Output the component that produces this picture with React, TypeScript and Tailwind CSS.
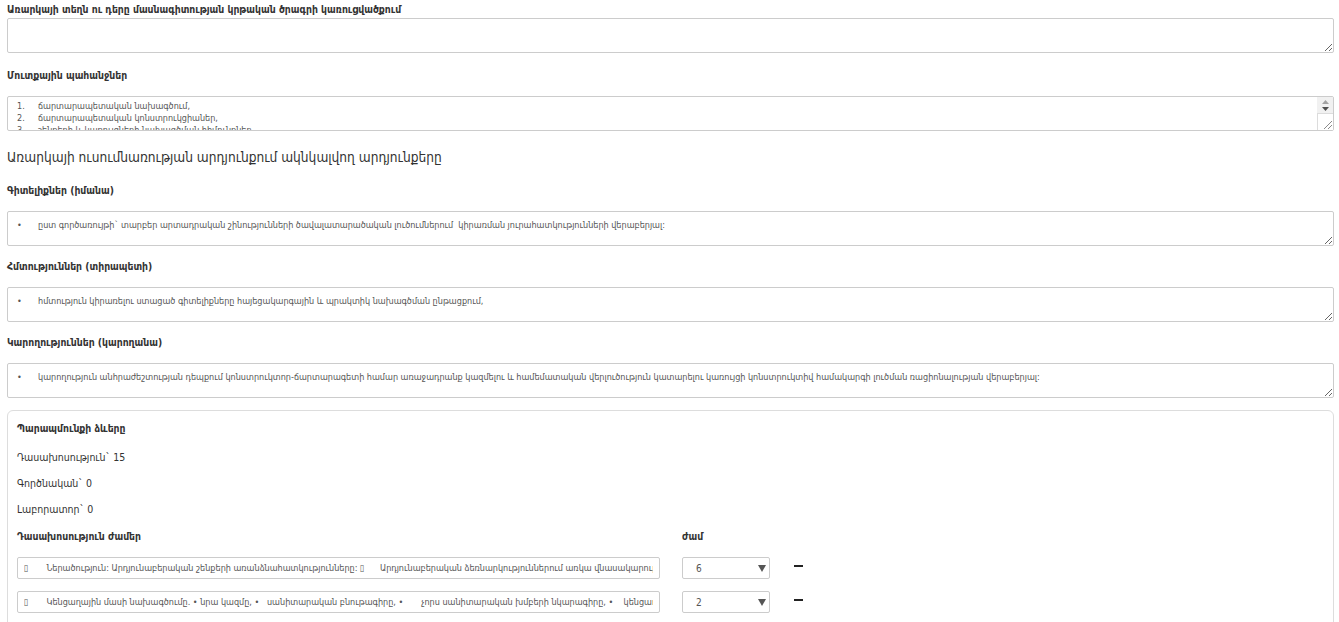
import React from 'react';

interface FieldProps {
  label: string;
  value?: string;
  scroll?: boolean;
  pad?: string;
  top?: string;
}

// Fake classic scrollbar for the overflowing textarea, sitting on top of its right edge.
const ScrollTrack: React.FC = () => (
  <div className="absolute right-[1px] top-[1px] bottom-[1px] w-[16px] flex flex-col pointer-events-none">
    <div className="h-[16px] bg-[#f1f1f1] flex flex-col items-center justify-center gap-[3px]">
      <svg width="7" height="4" viewBox="0 0 7 4">
        <path d="M0 4L3.5 0L7 4z" fill="#a3a3a3" />
      </svg>
      <svg width="7" height="4" viewBox="0 0 7 4">
        <path d="M0 0h7L3.5 4z" fill="#505050" />
      </svg>
    </div>
    <div className="flex-1 bg-white border-l border-t border-[#dcdcdc] relative">
      <svg className="absolute right-[1px] bottom-[1px]" width="9" height="9" viewBox="0 0 9 9">
        <path d="M9 1L1 9M9 5L5 9" stroke="#8a8a8a" strokeWidth="1" />
      </svg>
    </div>
  </div>
);

const Field: React.FC<FieldProps> = ({ label, value = '', scroll, pad = 'pt-[7px]', top = 'mt-[13px]' }) => (
  <div className={top}>
    <p className="h-[14px] text-[10.3px] leading-[14px] font-bold">{label}</p>
    <div className="relative mt-[14px]">
      <textarea
        readOnly
        defaultValue={value}
        className={`block w-full h-[35px] border border-[#ccc] rounded-[2px] bg-white pl-[9px] pr-2 ${pad} text-[9px] leading-[12px] text-[#555] [tab-size:21px] outline-none overflow-hidden`}
      />
      {scroll && <ScrollTrack />}
    </div>
  </div>
);

interface HourRow {
  id: number;
  topic: string;
  hours: string;
}

const rows: HourRow[] = [
  {
    id: 1,
    topic:
      '▯       Ներածություն: Արդյունաբերական շենքերի առանձնահատկությունները: ▯      Արդյունաբերական ձեռնարկություններում առկա վնասակարության գործոնները',
    hours: '6',
  },
  {
    id: 2,
    topic:
      '▯       Կենցաղային մասի նախագծումը. • նրա կազմը, •   սանիտարական բնութագիրը, •       չորս սանիտարական խմբերի նկարագիրը, •    կենցաղային սենքերի տեղադրումը',
    hours: '2',
  },
];

const HoursRow: React.FC<{ row: HourRow }> = ({ row }) => (
  <div className="flex items-center h-[22px]">
    <input
      readOnly
      value={row.topic}
      className="block w-[643px] h-[22px] border border-[#ccc] rounded-[2px] px-[6px] text-[9px] text-[#555] outline-none"
    />
    <div className="relative ml-[22px] w-[88px] h-[22px]">
      <select
        defaultValue={row.hours}
        className="block appearance-none w-full h-full border border-[#ccc] rounded-[2px] bg-white pl-[13px] text-[10px] text-[#555] outline-none"
      >
        {['1', '2', '3', '4', '5', '6', '7', '8'].map((h) => (
          <option key={h} value={h}>
            {h}
          </option>
        ))}
      </select>
      <svg className="absolute right-[4px] top-[8px] pointer-events-none" width="8" height="7" viewBox="0 0 8 7">
        <path d="M0 0h8L4 7z" fill="#555" />
      </svg>
    </div>
    <span className="ml-[24px] mb-[4px] w-[9px] h-[2px] bg-[#222]" />
  </div>
);

export default function App() {
  return (
    <div className="bg-white min-h-screen pl-[7px] pr-[5px] pt-[2px] text-[#333] font-['DejaVu_Sans',sans-serif] [font-stretch:condensed]">
      <p className="h-[14px] text-[10.3px] leading-[14px] font-bold">
        Առարկայի տեղն ու դերը մասնագիտության կրթական ծրագրի կառուցվածքում
      </p>
      <textarea
        readOnly
        className="mt-[2px] block w-full h-[35px] border border-[#ccc] rounded-[2px] bg-white outline-none"
      />
      <Field
        label="Մուտքային պահանջներ"
        top="mt-[15px]"
        pad="pt-[3px]"
        scroll
        value={'1.\tճարտարապետական նախագծում,\n2.\tճարտարապետական կոնստրուկցիաներ,\n3.\tշենքերի և կառույցների նախագծման հիմունքներ'}
      />
      <h2 className="mt-[16px] h-[20px] text-[13.6px] leading-[20px]">
        Առարկայի ուսումնառության արդյունքում ակնկալվող արդյունքերը
      </h2>
      <Field
        label="Գիտելիքներ (իմանա)"
        top="mt-[16px]"
        value={'•\tըստ գործառույթի` տարբեր արտադրական շինությունների ծավալատարածական լուծումներում  կիրառման յուրահատկությունների վերաբերյալ:'}
      />
      <Field
        label="Հմտություններ (տիրապետի)"
        value={'•\tհմտություն կիրառելու ստացած գիտելիքները հայեցակարգային և պրակտիկ նախագծման ընթացքում,'}
      />
      <Field
        label="Կարողություններ (կարողանա)"
        value={'•\tկարողություն անհրաժեշտության դեպքում կոնստրուկտոր-ճարտարագետի համար առաջադրանք կազմելու և համեմատական վերլուծություն կատարելու կառույցի կոնստրուկտիվ համակարգի լուծման ռացիոնալության վերաբերյալ:'}
      />

      <div className="mt-[12px] border border-[#ddd] rounded-[6px] px-[9px] pt-[10px] pb-[20px]">
        <p className="h-[14px] text-[10.3px] leading-[14px] font-bold">Պարապմունքի ձևերը</p>
        <div className="mt-[15px] flex flex-col gap-[12px] text-[10.5px] leading-[14px]">
          <p>Դասախոսություն` 15</p>
          <p>Գործնական` 0</p>
          <p>Լաբորատոր` 0</p>
        </div>
        <div className="mt-[13px] flex h-[14px] text-[10.3px] leading-[14px] font-bold">
          <p className="w-[665px]">Դասախոսություն ժամեր</p>
          <p>ժամ</p>
        </div>
        <div className="mt-[14px] flex flex-col gap-[12px]">
          {rows.map((row) => (
            <HoursRow key={row.id} row={row} />
          ))}
        </div>
      </div>
    </div>
  );
}
